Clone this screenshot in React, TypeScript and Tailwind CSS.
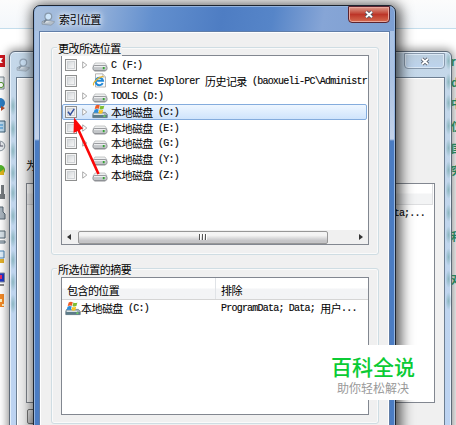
import React from "react";

type DriveKind = "disk" | "history" | "system";

interface Location {
  name: string;
  path: string;
  kind: DriveKind;
  expandable: boolean;
  checked?: boolean;
}

const locations: Location[] = [
  { name: "", path: "C (F:)", kind: "disk", expandable: true },
  { name: "", path: "Internet Explorer", kind: "history", expandable: false },
  { name: "", path: "TOOLS (D:)", kind: "disk", expandable: true },
  { name: "本地磁盘", path: "(C:)", kind: "system", expandable: true, checked: true },
  { name: "本地磁盘", path: "(E:)", kind: "disk", expandable: true },
  { name: "本地磁盘", path: "(G:)", kind: "disk", expandable: true },
  { name: "本地磁盘", path: "(Y:)", kind: "disk", expandable: false },
  { name: "本地磁盘", path: "(Z:)", kind: "disk", expandable: true },
];

const Zh = ({ children }: { children: React.ReactNode }) => (
  <span className="font-['Noto_Sans_CJK_SC',sans-serif] text-[11px] tracking-[-0.56px]">
    {children}
  </span>
);

const Mono = ({ children }: { children: React.ReactNode }) => (
  <span className="font-['Liberation_Mono',monospace] text-[10px] tracking-[-0.78px] whitespace-pre [-webkit-text-stroke:0.15px_#222]">
    {children}
  </span>
);

const DiskIcon = () => (
  <svg width="16" height="14" viewBox="0 0 16 14">
    <path d="M3 5h10l2 3H1z" fill="#eeeff0" stroke="#a5a7aa" strokeWidth=".6" />
    <rect x=".9" y="7.6" width="14.2" height="5" rx="2" fill="#c3c6c9" stroke="#85888d" strokeWidth=".8" />
    <path d="M2 8.6h11.5" stroke="#f2f3f4" />
    <rect x="10.8" y="9" width="1.8" height="2.2" fill="#36a536" />
    <path d="M2.4 13h11" stroke="#707379" strokeWidth=".7" />
  </svg>
);

const SystemIcon = () => (
  <svg width="16" height="15" viewBox="0 0 16 15">
    <path d="M1.5 8.4h12l1.8 2.2v3H.7v-3z" fill="#a7b5bd" stroke="#60747f" strokeWidth=".7" />
    <path d="M1 10.9h14v2.8H1z" fill="#5d7c89" />
    <path d="M2 10.4h10" stroke="#dfe7ea" />
    <rect x="11.4" y="11.4" width="2" height="1.5" fill="#6fdb5b" />
    <path d="M3.7 1.4Q5.8.1 7.8 1.2L6.9 4.7Q4.9 4 2.7 5z" fill="#ee5b25" />
    <path d="M8.4 1.5q2.1 1.1 4-.1l-1 3.6q-2 1-3.9-.1z" fill="#80bd32" />
    <path d="M2.5 5.7q2.1-1.1 4.2-.2l-.9 3.4q-2-.9-4.1.1z" fill="#2c8ed9" />
    <path d="M7.4 5.7q1.8 1 3.8.1l-.9 3.4q-2 1-3.8-.1z" fill="#fbc523" />
  </svg>
);

const HistoryIcon = () => (
  <svg width="16" height="15" viewBox="0 0 16 15">
    <path d="M3.5.8h7.2L13.5 4v10h-10z" fill="#fafafa" stroke="#a4a4a4" strokeWidth=".8" />
    <path d="M10.7.8V4h2.8" fill="#ddd" stroke="#aaa" strokeWidth=".6" />
    <path
      d="M10.7 10.1a3.7 3.7 0 1 1 .3-2.3H4.6"
      fill="none"
      stroke="#1f88d8"
      strokeWidth="2"
    />
    <path d="M1.8 12.3C-.2 10 8 2.7 11.5 3.7" fill="none" stroke="#e9b72e" strokeWidth="1.1" />
  </svg>
);

const LocationIcon = ({ kind }: { kind: DriveKind }) => {
  if (kind === "system") return <SystemIcon />;
  if (kind === "history") return <HistoryIcon />;
  return <DiskIcon />;
};

const Checkbox = ({ checked }: { checked?: boolean }) => (
  <span className="flex h-[12px] w-[12px] shrink-0 items-center justify-center border border-[#8e8f8f] bg-[#f4f4f4] p-px">
    <span className="flex h-full w-full items-center justify-center border border-[#d0d3d6] bg-linear-to-br from-[#d6d9dc] to-[#f6f6f6]">
      {checked && (
        <svg width="8" height="8" viewBox="0 0 8 8" className="shrink-0">
          <path d="M1 3.8 3.2 6.8 7.2.8" fill="none" stroke="#314e9b" strokeWidth="1.5" />
        </svg>
      )}
    </span>
  </span>
);

const IndexIcon = ({ faded }: { faded?: boolean }) => (
  <svg width="14" height="14" viewBox="0 0 14 14" opacity={faded ? 0.75 : 1}>
    <path d="m1 9.7 3.2-1.5 9 1.3-3 2.7-9-1z" fill="#dce1e6" stroke="#7e8b99" strokeWidth=".8" />
    <path d="M1 11.2v1l9 1 3.2-2.6V9.5" fill="#b4bfca" stroke="#7e8b99" strokeWidth=".6" />
    <circle cx="7.3" cy="4.6" r="3.4" fill="#cde5fa" stroke="#8899ab" strokeWidth="1.2" />
    <path d="M5.4 7.4 2.7 10.8" stroke="#778695" strokeWidth="1.6" />
  </svg>
);

const CloseGlyph = () => (
  <svg width="10" height="9" viewBox="0 0 10 9">
    <path d="m2 1.7 6 5.6m0-5.6L2 7.3" stroke="#4b5361" strokeWidth="3.6" />
    <path d="m2 1.7 6 5.6m0-5.6L2 7.3" stroke="#fff" strokeWidth="1.9" />
  </svg>
);

const GroupBox = ({
  title,
  className,
  children,
}: {
  title: string;
  className: string;
  children: React.ReactNode;
}) => (
  <fieldset
    className={`relative min-w-0 rounded-[3px] border border-[#cfdde3] px-[9px] shadow-[inset_0_0_0_1px_#fafafa] ${className}`}
  >
    <span className="absolute -top-[8px] left-[5px] bg-[#f0f0f0] px-px leading-[15px]">
      <Zh>{title}</Zh>
    </span>
    {children}
  </fieldset>
);

// slivers of the desktop shortcuts left of the dialogs
const Shortcuts = () => (
  <svg className="absolute top-0 left-0" width="9" height="425" viewBox="0 0 9 425">
    <path d="M0 55h5v12H0z" fill="#cf1720" />
    <path d="m0 58 3 0-2 3 2 2H0" fill="#fff" />
    <path d="M0 77h4v12H0" fill="#e8eef2" stroke="#7b8790" />
    <circle cx="1" cy="85" r="2.6" fill="#fff" stroke="#50952d" />
    <circle cx="0" cy="103" r="5" fill="#2c7dc4" />
    <path d="m1 106 4 2-4 3" fill="#b94c2b" />
    <path d="M0 121h5v11H0" fill="#bcd9ee" stroke="#3e6077" />
    <path d="M0 125h3m-3 3h3" stroke="#2d8bcf" />
    <circle cx="0" cy="146" r="4.8" fill="#e9edf1" stroke="#8a96a0" />
    <path d="M0 142v4h3" stroke="#556" fill="none" />
    <circle cx="0" cy="170" r="5" fill="#53b42c" />
    <path d="m0 172 4-3v6H0" fill="#e0b71e" />
    <path d="M1 185h3v9h1v5H0v-5h1z" fill="#777c80" />
    <path d="M0 207h3v5l2 2v5H0" fill="#a9b5bf" stroke="#566773" />
    <path d="M0 231h5v7H0m0 3h5v2H0" fill="#d8e2e9" stroke="#596b78" />
    <path d="M0 251h4v7H0" fill="#e1f0fb" stroke="#4a87ba" />
    <path d="M0 259h4v4H0" fill="#e3b12b" />
    <path d="M0 273h4.5v9H0" fill="#1f38c8" stroke="#8791a0" />
    <path d="M0 275h2v4H0" fill="#e22c6c" />
    <path d="M0 284h4v2H0" fill="#888" />
    <path d="M0 294h4v13H0" fill="#f38a28" />
    <path d="M0 299h2v3H0m2 2h2v2H2" fill="#fff3c4" />
  </svg>
);

const sideText = [
  { top: "top-[54px]", text: "r" },
  { top: "top-[75px]", text: "d" },
  { top: "top-[96px]", text: "中" },
  { top: "top-[119px]", text: "仅" },
  { top: "top-[141px]", text: "国" },
  { top: "top-[163px]", text: "穷" },
  { top: "top-[229px]", text: "和" },
  { top: "top-[272px]", text: "对" },
];

// page colours showing through the glass frame
const glassSpots = [61, 82, 103, 126, 148, 170, 190, 213, 235, 257, 279, 301];

const GlassTint = () => (
  <svg className="absolute top-0 left-0" width="456" height="425" viewBox="0 0 456 425">
    <defs>
      <radialGradient id="spot">
        <stop offset="0" stopColor="#6fa5a8" stopOpacity=".65" />
        <stop offset="1" stopColor="#6fa5a8" stopOpacity="0" />
      </radialGradient>
    </defs>
    {glassSpots.map((y) => (
      <g key={y}>
        {y > 90 && <ellipse cx="13" cy={y + 3} rx="3" ry="10" fill="url(#spot)" />}
        <ellipse cx="448.5" cy={y} rx="3" ry="9" fill="url(#spot)" />
      </g>
    ))}
  </svg>
);

const BackWindow = () => (
  <div className="absolute top-[51px] left-[9px] flex h-[390px] w-[443px] flex-col rounded-t-[6px] border border-[#5e6a78] bg-[#bdd4ef] bg-linear-to-b from-[#c5d8e9] to-[#bcd3f2] px-[6px] shadow-[0_0_9px_2px_rgba(0,0,0,0.42),inset_0_0_0_1px_#e4effa]">
    <div className="flex h-[25px] shrink-0 items-start justify-between">
      <div className="pt-[6px]">
        <IndexIcon faded />
      </div>
      <div className="mt-px flex h-[16px] w-[41px] items-center justify-center rounded-b-[4px] border border-[#8899ac] bg-linear-to-b from-[#bccfdf] to-[#bdd4ee] shadow-[inset_0_0_0_1px_#dbe8f5]">
        <CloseGlyph />
      </div>
    </div>
    <div className="flex-1 border border-[#6c7e91] bg-[#f0f0f0] pl-[9px] shadow-[inset_1px_1px_0_#fff]">
      <div className="flex h-[105px] items-end pb-[10px] leading-[16px]">
        <Zh>为</Zh>
      </div>
      <div className="h-[220px] w-[409px] border border-[#828790] bg-white">
        <div className="mr-px h-[21px] border-r border-b border-[#dedfe1] bg-linear-to-b from-white from-45% to-[#f3f4f5] to-50%" />
        <div className="flex justify-end pr-[9px] pt-px leading-[15px]">
          <Mono>Data;...</Mono>
        </div>
      </div>
      <div className="mt-[6px] ml-px h-[15px] w-[76px] rounded-[2px] border border-[#777] bg-linear-to-b from-[#f2f2f2] to-[#cfcfcf]" />
    </div>
  </div>
);

const LocationRow = ({ item }: { item: Location }) => (
  <div
    className={`flex h-[15.7px] shrink-0 items-center pl-[2px] ${
      item.checked
        ? "mr-px rounded-[2px] border border-[#84acdd] bg-linear-to-b from-[#eef6ff] to-[#cfe4fc]"
        : "border border-transparent"
    }`}
  >
    <Checkbox checked={item.checked} />
    <span className="ml-[5px] flex w-[10px] shrink-0">
      {item.expandable && (
        <svg width="6" height="8" viewBox="0 0 6 8">
          <path d="M.7.8v6.4L4.8 4z" fill="#fff" stroke="#a0a0a0" strokeWidth=".9" />
        </svg>
      )}
    </span>
    <span className="shrink-0">
      <LocationIcon kind={item.kind} />
    </span>
    <span className="ml-[3px] flex items-center pt-px whitespace-pre leading-[15px]">
      {item.name && <Zh>{item.name}</Zh>}
      <Mono>{item.name ? ` ${item.path}` : item.path}</Mono>
      {item.kind === "history" && (
        <>
          <Mono> </Mono>
          <Zh>历史记录</Zh>
          <Mono>{" (baoxueli-PC\\Administr"}</Mono>
        </>
      )}
    </span>
  </div>
);

const Scrollbar = () => (
  <div className="mt-auto flex h-[14px] shrink-0 items-center bg-[#f0f0f0]">
    <svg width="16" height="8" viewBox="0 0 16 8">
      <path d="M9 1v6L5 4z" fill="#333" />
    </svg>
    <div className="flex h-[13px] w-[250px] shrink-0 items-center justify-center gap-px rounded-[2px] border border-[#979797] bg-linear-to-b from-[#f4f4f4] from-30% to-[#c4c4c6] to-80%">
      <span className="h-[6px] w-[2px] border-l border-[#555] bg-white" />
      <span className="h-[6px] w-[2px] border-l border-[#555] bg-white" />
      <span className="h-[6px] w-[2px] border-l border-[#555] bg-white" />
    </div>
    <svg width="8" height="8" viewBox="0 0 8 8" className="mr-[2px] ml-auto">
      <path d="M1 1v6l4-3z" fill="#333" />
    </svg>
  </div>
);

const Dialog = () => (
  <div className="absolute top-[5px] left-[33px] flex h-[440px] w-[363px] flex-col rounded-t-[7px] border border-[#1c2430] bg-[#4d7fc6] bg-[linear-gradient(to_bottom,#a9c3e6_0px,#abc2e2_70px,#c3d2e9_133px,#4b7cc2_135px,#4b7cc2_100%)] px-[5px] shadow-[2px_2px_13px_3px_rgba(0,0,0,0.68),inset_0_0_0_1px_#94b4df]">
    <div className="-mx-[4px] mt-px flex h-[24px] shrink-0 items-start justify-between rounded-t-[5px] bg-[linear-gradient(100deg,#a9c0dd_0%,#91afd9_18%,#628fce_33%,#4e7dc3_52%,#5685c8_66%,#86a5d6_80%,#7d9fd2_100%)] px-[4px]">
      <div className="flex items-center gap-[4px] pt-[4px] pl-[2px]">
        <IndexIcon />
        <span className="leading-[15px] [text-shadow:0_0_5px_#fff,0_0_8px_#fff]">
          <Zh>索引位置</Zh>
        </span>
      </div>
      <div className="-mt-px flex h-[17px] w-[42px] items-center justify-center rounded-b-[4px] border border-[#5a2430] bg-linear-to-b from-[#dc9a8d] from-0% via-[#bd3528] via-50% to-[#d56a50] shadow-[inset_0_0_0_1px_#e9a69b]">
        <CloseGlyph />
      </div>
    </div>
    <div className="flex-1 border border-[#617ea8] bg-[#f0f0f0] pt-[15px] pr-[10px] pl-[11px] shadow-[inset_1px_1px_0_#fff,inset_-1px_0_0_#fff]">
      <GroupBox title="更改所选位置" className="h-[208px] pt-[7px]">
        <div className="flex h-[190px] flex-col overflow-hidden border border-[#828790] bg-white pt-px">
          {locations.map((item, i) => (
            <LocationRow key={i} item={item} />
          ))}
          <Scrollbar />
        </div>
      </GroupBox>
      <GroupBox title="所选位置的摘要" className="mt-[13px] h-[156px] pt-[8px]">
        <div className="flex h-[138px] flex-col border border-[#828790] bg-white">
          <div className="flex h-[22px] border-b border-[#d5d5d5] bg-linear-to-b from-white from-45% to-[#f3f4f6] to-55% leading-[22px]">
            <span className="w-[154px] border-r border-[#e0e3e7] pl-[5px]">
              <Zh>包含的位置</Zh>
            </span>
            <span className="pl-[5px]">
              <Zh>排除</Zh>
            </span>
          </div>
          <div className="flex h-[17px] items-center whitespace-pre leading-[15px]">
            <span className="flex w-[154px] items-center pl-[3px]">
              <SystemIcon />
              <Zh>本地磁盘</Zh>
              <Mono>{" (C:)"}</Mono>
            </span>
            <span className="flex items-center pl-[5px]">
              <Mono>{"ProgramData; Data; "}</Mono>
              <Zh>用户</Zh>
              <Mono>...</Mono>
            </span>
          </div>
        </div>
      </GroupBox>
    </div>
  </div>
);

export default function App() {
  return (
    <div className="relative h-[425px] w-[456px] overflow-hidden bg-white text-black">
      <div className="h-[29px] border-b border-[#c3ddec] bg-linear-to-b from-[#fcfcfc] to-[#f3f7fb]" />
      <Shortcuts />
      <BackWindow />
      <GlassTint />
      {sideText.map((item) => (
        <span
          key={item.top}
          className={`absolute left-[451px] font-['Noto_Sans_CJK_SC',sans-serif] text-[11px] leading-[14px] font-bold text-[#28805a] ${item.top}`}
        >
          {item.text}
        </span>
      ))}
      <Dialog />
      <svg className="absolute top-[116px] left-[70px]" width="34" height="62" viewBox="0 0 34 62">
        <path d="M28.5 58 8.5 14" stroke="#fb0707" strokeWidth="2.6" />
        <path d="M4 1.5 3.5 17l9.5-4.5z" fill="#fb0707" />
      </svg>
      <div className="absolute top-[345px] left-[328px] flex h-[55px] w-[90px] flex-col items-center bg-white font-['Noto_Sans_CJK_SC',sans-serif] whitespace-nowrap">
        <span className="mt-[9px] text-[21px] leading-[25px] font-medium text-[#0bcb35]">
          百科全说
        </span>
        <span className="mt-px text-[12px] leading-[16px] text-[#999]">助你轻松解决</span>
      </div>
    </div>
  );
}
